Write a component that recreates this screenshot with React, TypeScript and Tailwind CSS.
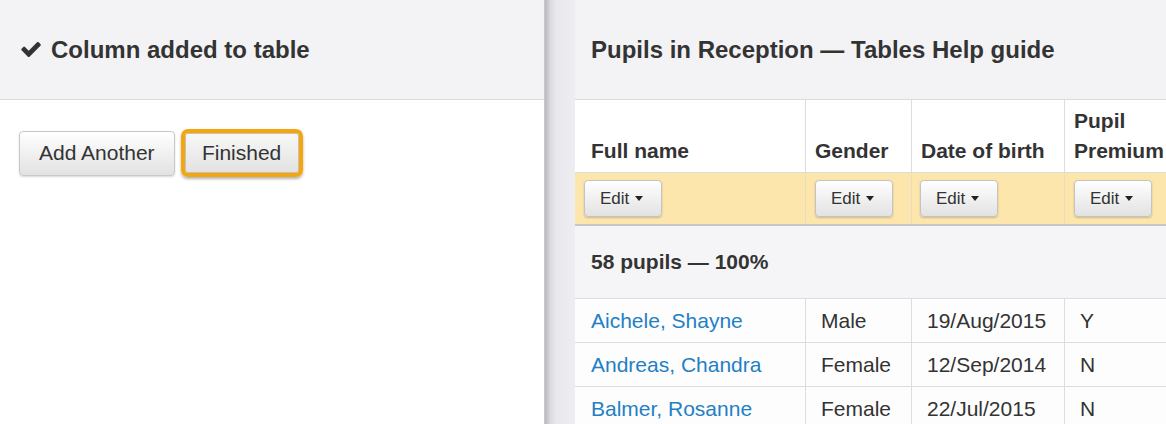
import React from 'react';

interface Pupil {
  name: string;
  gender: string;
  dob: string;
  premium: string;
}

const pupils: Pupil[] = [
  { name: 'Aichele, Shayne', gender: 'Male', dob: '19/Aug/2015', premium: 'Y' },
  { name: 'Andreas, Chandra', gender: 'Female', dob: '12/Sep/2014', premium: 'N' },
  { name: 'Balmer, Rosanne', gender: 'Female', dob: '22/Jul/2015', premium: 'N' },
];

const cols = 'grid grid-cols-[230px_106px_153px_110px] w-[599px]';

const CheckIcon = () => (
  <svg viewBox="121 334 1550 1188" className="w-[20px] h-[15px] fill-[#333]">
    <path d="M1671 566q0 40-28 68l-724 724-136 136q-28 28-68 28t-68-28l-136-136-362-362q-28-28-28-68t28-68l136-136q28-28 68-28t68 28l294 295 656-657q28-28 68-28t68 28l136 136q28 28 28 68z" />
  </svg>
);

const EditButton = () => (
  <button className="h-[37px] w-[78px] pl-[15px] flex items-center gap-[6px] rounded-[4px] border border-[#c4c4c4] bg-linear-to-b from-white to-[#e2e2e2] text-[17px] text-[#333] shadow-[0_1px_2px_rgba(0,0,0,0.2)]">
    <span>Edit</span>
    <span className="w-0 h-0 border-x-[4px] border-x-transparent border-t-[5px] border-t-[#222]" />
  </button>
);

const App: React.FC = () => {
  return (
    <div className="w-[1166px] h-[424px] overflow-hidden flex bg-white text-[#333] font-['Liberation_Sans',Arial,sans-serif]">
      {/* left panel */}
      <div className="w-[544px] h-full flex flex-col bg-white">
        <div className="h-[100px] shrink-0 bg-[#f3f3f5] border-b border-[#dadada] flex items-center pl-[21px] gap-[10px]">
          <CheckIcon />
          <h3 className="text-[24px] font-bold">Column added to table</h3>
        </div>
        <div className="pt-[29px] pl-[19px] flex items-center gap-[6px]">
          <button className="h-[45px] px-[19px] rounded-[4px] border border-[#c8c8c8] bg-linear-to-b from-white to-[#e2e2e2] text-[21px] text-[#333] shadow-[0_1px_2px_rgba(0,0,0,0.15)]">
            Add Another
          </button>
          <button className="h-[48px] w-[122px] rounded-[7px] border-[4px] border-[#f5a60c] bg-linear-to-b from-[#f8f8f8] to-[#e2e2e2] text-[21px] text-[#333] shadow-[inset_0_0_0_1px_#c2c2c2,0_2px_3px_rgba(0,0,0,0.3)]">
            Finished
          </button>
        </div>
      </div>

      {/* splitter */}
      <div className="w-[31px] h-full shrink-0 bg-[linear-gradient(to_right,#d6d6d8_0px,#bcbcbf_1px,#c4c4c8_3px,#dadade_6px,#e9e9ed_12px,#eeeef2_100%)]" />

      {/* right panel */}
      <div className="flex-1 min-w-0 h-full overflow-hidden flex flex-col">
        <div className="h-[100px] shrink-0 bg-[#f3f3f5] border-b border-[#dadada] flex items-center pl-[16px]">
          <h3 className="text-[24px] font-bold whitespace-nowrap">Pupils in Reception — Tables Help guide</h3>
        </div>

        <div className="text-[21px]">
          {/* header */}
          <div className={`${cols} h-[73px] border-b border-[#dddddd] bg-white font-bold leading-[30px]`}>
            <div className="flex items-end pl-[16px] pb-[6px]">Full name</div>
            <div className="flex items-end pl-[9px] pb-[6px] border-l border-[#dddddd]">Gender</div>
            <div className="flex items-end pl-[9px] pb-[6px] border-l border-[#dddddd] whitespace-nowrap">Date of birth</div>
            <div className="flex items-end pl-[9px] pb-[6px] border-l border-[#dddddd]">Pupil Premium</div>
          </div>

          {/* edit row */}
          <div className={`${cols} h-[53px] border-b-2 border-[#c6c6c6] bg-[#fde6ab]`}>
            <div className="flex items-center pl-[9px]"><EditButton /></div>
            <div className="flex items-center pl-[9px] border-l border-[#e9dcc0]"><EditButton /></div>
            <div className="flex items-center pl-[8px] border-l border-[#e9dcc0]"><EditButton /></div>
            <div className="flex items-center pl-[9px] border-l border-[#e9dcc0]"><EditButton /></div>
          </div>

          {/* summary */}
          <div className="h-[73px] border-b border-[#dddddd] bg-[#f5f5f7] flex items-center pl-[16px] font-bold">
            58 pupils — 100%
          </div>

          {pupils.map((p) => (
            <div key={p.name} className={`${cols} h-[44px] border-b border-[#dddddd] bg-[#fdfdfd]`}>
              <div className="flex items-center pl-[16px]">
                <a href="#" className="text-[#1f80c6]">{p.name}</a>
              </div>
              <div className="flex items-center pl-[15px] border-l border-[#dddddd]">{p.gender}</div>
              <div className="flex items-center pl-[15px] border-l border-[#dddddd]">{p.dob}</div>
              <div className="flex items-center pl-[15px] border-l border-[#dddddd]">{p.premium}</div>
            </div>
          ))}
        </div>
      </div>
    </div>
  );
};

export default App;
